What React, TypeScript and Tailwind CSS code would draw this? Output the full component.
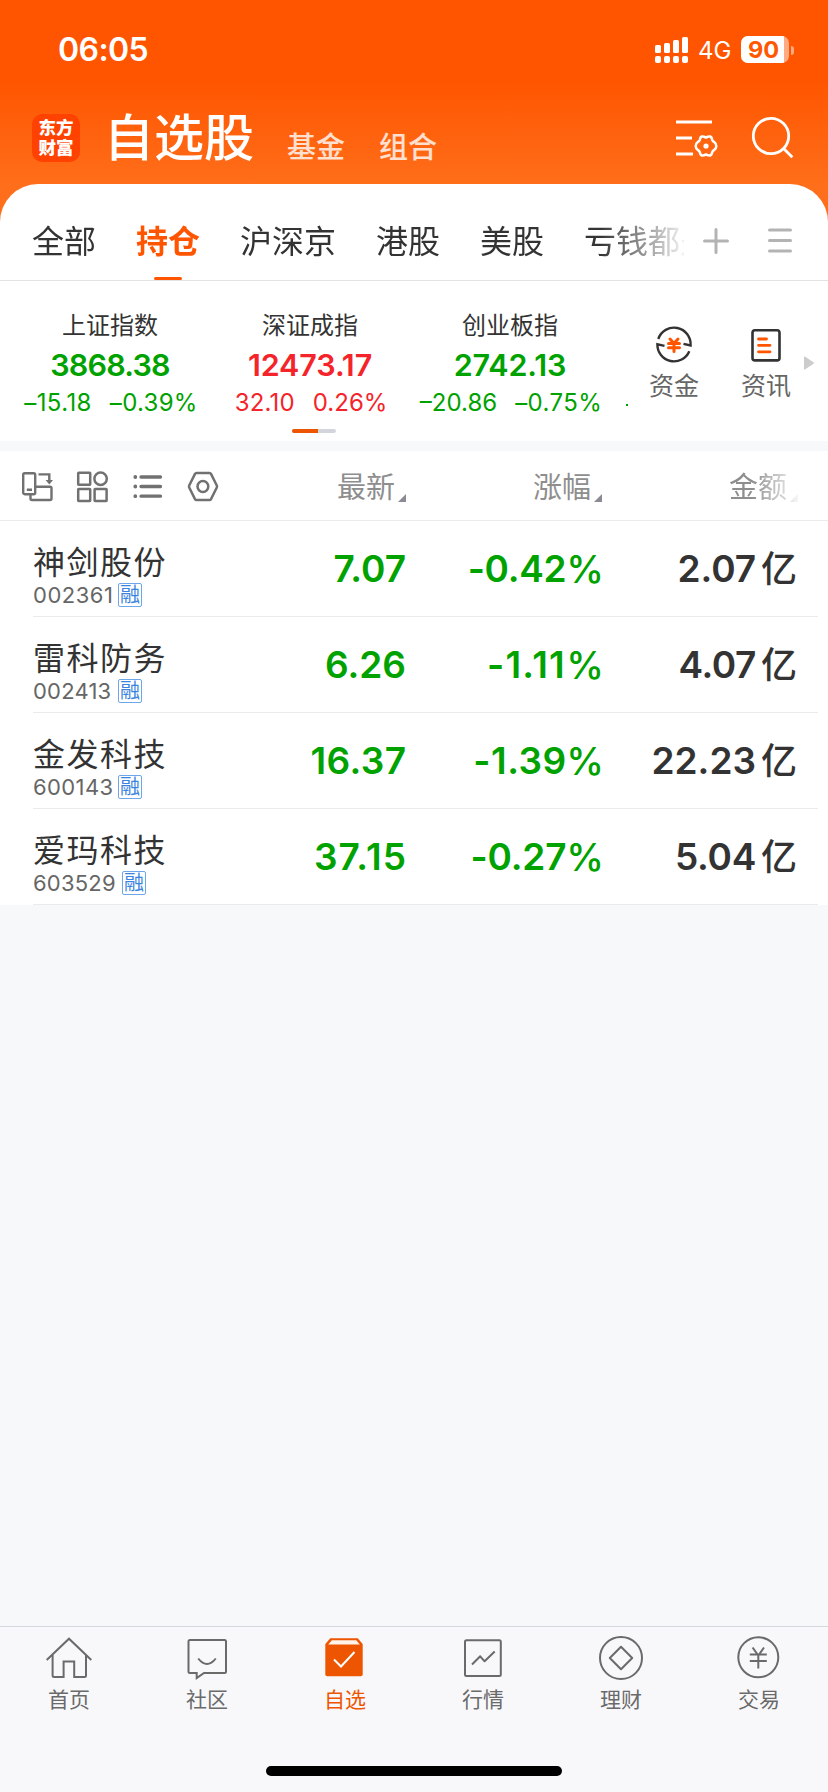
import type { ReactNode } from "react";

const GREEN = "text-[#00a200]";
const RED = "text-[#f4242a]";

const tabs = ["全部", "持仓", "沪深京", "港股", "美股", "亏钱都是"];

const indices = [
  { name: "上证指数", value: "3868.38", diff: "–15.18", pct: "–0.39%", color: GREEN, valueCls: "tracking-[-0.8px]", diffCls: "tracking-[0.4px]", pctCls: "tracking-[0.3px]" },
  { name: "深证成指", value: "12473.17", diff: "32.10", pct: "0.26%", color: RED, valueCls: "tracking-[-0.1px]", diffCls: "tracking-[0.2px]", pctCls: "" },
  { name: "创业板指", value: "2742.13", diff: "–20.86", pct: "–0.75%", color: GREEN, valueCls: "tracking-[-0.1px]", diffCls: "", pctCls: "tracking-[0.4px]" },
];

const stocks = [
  { name: "神剑股份", code: "002361", codeCls: "w-[85px] tracking-[0.5px]", price: "7.07", priceCls: "", pct: "-0.42", pctCls: "tracking-[-0.3px]", amount: "2.07", amountCls: "tracking-[-0.1px]" },
  { name: "雷科防务", code: "002413", codeCls: "w-[85px] tracking-[0.2px]", price: "6.26", priceCls: "", pct: "-1.11", pctCls: "tracking-[1.3px] mr-[0.2px]", amount: "4.07", amountCls: "tracking-[-0.4px]" },
  { name: "金发科技", code: "600143", codeCls: "w-[85px] tracking-[0.4px]", price: "16.37", priceCls: "tracking-[0.4px] mr-[-0.4px]", pct: "-1.39", pctCls: "tracking-[0.5px] mr-[-0.5px]", amount: "22.23", amountCls: "" },
  { name: "爱玛科技", code: "603529", codeCls: "w-[89px] tracking-[0.2px]", price: "37.15", priceCls: "tracking-[1.1px] mr-[-1.1px]", pct: "-0.27", pctCls: "tracking-[-0.2px]", amount: "5.04", amountCls: "tracking-[-0.3px]" },
];

function StatusBar() {
  return (
    <div className="flex h-[100px] items-center pl-[58px] pr-[34px] text-white">
      <span className="text-[32px] font-semibold leading-none tracking-[-0.6px]">06:05</span>
      <svg className="ml-auto h-[26px] w-[33px]" viewBox="0 0 33 26" fill="currentColor">
        <rect x="0" y="8" width="6" height="8" rx="1.5" />
        <rect x="9" y="6" width="6" height="10" rx="1.5" />
        <rect x="18" y="3" width="6" height="13" rx="1.5" />
        <rect x="27" y="0" width="6" height="16" rx="1.5" />
        <rect x="0" y="19" width="6" height="7" rx="2" />
        <rect x="9" y="19" width="6" height="7" rx="2" />
        <rect x="18" y="19" width="6" height="7" rx="2" />
        <rect x="27" y="19" width="6" height="7" rx="2" />
      </svg>
      <span className="ml-[10px] mt-[2px] w-[34px] text-[24px] leading-none">4G</span>
      <div className="mb-px ml-[9px] flex h-[27px] w-[48px] overflow-hidden rounded-[7px] bg-white/50">
        <span className="flex h-full w-[43px] items-center justify-center bg-white pl-[2px] text-[23.5px] font-bold leading-none text-[#ff5800]">
          90
        </span>
      </div>
      <span className="ml-[2px] h-[9px] w-[3px] rounded-r-full bg-white/50" />
    </div>
  );
}

function TitleBar() {
  return (
    <div className="flex h-[84px] pl-8 pr-[34px] text-white">
      <div className="mt-[14px] flex h-12 w-12 flex-col items-center justify-center rounded-[10px] bg-[#ff4200] text-[17.5px] font-black leading-[20px]">
        <span>东方</span>
        <span>财富</span>
      </div>
      <h1 className="ml-[24px] mt-[10px] text-[50px] font-medium leading-[56px]">自选股</h1>
      <span className="ml-[33px] mt-[28px] text-[29px] font-medium leading-[40px] text-white/80">基金</span>
      <span className="ml-[34px] mt-[28px] text-[29px] font-medium leading-[40px] text-white/80">组合</span>
      <svg className="ml-auto mt-[18px] h-[42px] w-[44px]" viewBox="0 0 44 42" fill="none" stroke="currentColor" strokeWidth="3">
        <path d="M1 4h36M1 20h16M1 36h17" />
        <path
          d="M31 19.600Q33 18.300 35.300 18.500Q36.800 19.200 37.200 21.800Q37.700 23.300 39.200 24Q41.300 25.500 41.300 28Q41.300 30.500 39.200 32Q37.700 32.700 37.200 34.200Q36.800 36.800 35.300 37.500Q33 37.700 31 36.400Q29 37.700 26.700 37.500Q25.200 36.800 24.800 34.200Q24.300 32.700 22.800 32Q20.700 30.500 20.700 28Q20.700 25.500 22.800 24Q24.300 23.300 24.800 21.800Q25.200 19.200 26.700 18.500Q29 18.300 31 19.600z"
          strokeWidth="2.5"
          strokeLinejoin="round"
        />
        <circle cx="31" cy="28" r="2.6" fill="currentColor" stroke="none" />
      </svg>
      <svg className="ml-[31px] mt-[16px] h-[44px] w-[44px]" viewBox="0 0 44 44" fill="none" stroke="currentColor" strokeWidth="2.8">
        <circle cx="21" cy="20" r="17.7" />
        <path d="M33.300 32.300l9 9" />
      </svg>
    </div>
  );
}

function GroupTabs() {
  return (
    <div className="flex h-[97px] border-b border-[#e2e2e2]">
      <div className="flex w-[684px] gap-10 overflow-hidden whitespace-nowrap pl-8 [mask-image:linear-gradient(to_right,black_600px,transparent_690px)]">
        {tabs.map((t, i) => (
          <div key={t} className="flex shrink-0 flex-col items-center">
            <span
              className={
                i === 1
                  ? "mt-[38px] text-[32px] font-bold leading-[40px] text-[#ff5500]"
                  : "mt-[38px] text-[32px] leading-[40px] text-[#333]"
              }
            >
              {t}
            </span>
            {i === 1 && <span className="mt-[15px] h-1 w-7 rounded-[2px] bg-[#ff5500]" />}
          </div>
        ))}
      </div>
      <svg className="ml-[18px] mt-[43px] h-7 w-7" viewBox="0 0 28 28" stroke="#b3b3b3" strokeWidth="3" strokeLinecap="round">
        <path d="M14 2.500v23M2.500 14h23" />
      </svg>
      <svg className="ml-[37px] mt-[43px] h-7 w-[26px]" viewBox="0 0 26 28" stroke="#b3b3b3" strokeWidth="3" strokeLinecap="round">
        <path d="M2.500 3h21M2.500 13.500h21M2.500 24h21" />
      </svg>
    </div>
  );
}

function IndexPanel() {
  return (
    <div className="flex h-[160px]">
      <div className="flex w-[628px] flex-col overflow-hidden pl-[10px]">
        <div className="flex">
          {indices.map((x) => (
            <div key={x.name} className="flex w-[200px] shrink-0 flex-col items-center whitespace-nowrap">
              <span className="mt-[29px] text-[24px] leading-[32px] text-[#333]">{x.name}</span>
              <span className={`mt-[5px] text-[30.5px] font-semibold leading-[36px] ${x.color} ${x.valueCls}`}>{x.value}</span>
              <span className={`mt-[4px] flex gap-[18px] pl-[2px] text-[24px] leading-[32px] ${x.color}`}>
                <span className={x.diffCls}>{x.diff}</span>
                <span className={x.pctCls}>{x.pct}</span>
              </span>
            </div>
          ))}
          <span className="ml-[16px] mt-[123px] h-[2px] w-2 shrink-0 bg-[#00a200]" />
        </div>
        <div className="ml-[282px] mt-[10px] flex h-1 w-[44px] shrink-0 overflow-hidden rounded-[2px] bg-[#d2d6dc]">
          <span className="w-[26px] bg-[#ec5600]" />
        </div>
      </div>
      <div className="ml-[22px] flex w-[48px] flex-col items-center">
        <svg className="mt-[44px] h-10 w-10" viewBox="0 0 40 40" fill="none" stroke="#333" strokeWidth="2.4">
          <path d="M4.300 14A16.600 16.600 0 0 1 36.600 20.500L29.500 18.800" />
          <path d="M35.300 26.200A16.600 16.600 0 0 1 3.400 19.300L10.500 20.800" />
          <g stroke="#ff5500" strokeWidth="3" strokeLinecap="round">
            <path d="M16 14l4 4.500 4-4.500M14.500 18.500h11M14.500 22.800h11M20 19v7.500" />
          </g>
        </svg>
        <span className="mt-[5px] whitespace-nowrap text-[25px] leading-[32px] text-[#666]">资金</span>
      </div>
      <div className="ml-[44px] flex w-[48px] flex-col items-center">
        <svg className="mt-[44px] h-10 w-10" viewBox="0 0 40 40" fill="none" stroke="#333" strokeWidth="2.6">
          <rect x="6.500" y="5.200" width="27" height="30.200" rx="2.500" />
          <path d="M12.500 14h8M12.500 20.300h11.500M12.500 26.800h11.500" stroke="#ff5500" strokeWidth="2.800" strokeLinecap="round" />
        </svg>
        <span className="mt-[5px] whitespace-nowrap text-[25px] leading-[32px] text-[#666]">资讯</span>
      </div>
      <svg className="ml-[14px] mt-[75px] h-[14px] w-[10px]" viewBox="0 0 10 14" fill="#ccc">
        <path d="M0 1.500Q0 0 1.300.800L9.500 6.300Q10.400 7 9.500 7.700L1.300 13.200Q0 14 0 12.500z" />
      </svg>
    </div>
  );
}

function SortLabel({ children, faded }: { children: ReactNode; faded?: boolean }) {
  return (
    <span
      className={
        faded
          ? "flex w-[196px] justify-end [mask-image:linear-gradient(to_right,black_150px,transparent_200px)]"
          : "flex w-[196px] justify-end"
      }
    >
      <span className="text-[29px] leading-[40px] text-[#8e8e8e]">{children}</span>
      <svg className="ml-[3px] mt-[26px] h-2 w-2" viewBox="0 0 8 8" fill="#8a8a94">
        <path d="M8 0v8H0z" />
      </svg>
    </span>
  );
}

function TableHeader() {
  return (
    <div className="flex h-[70px] items-center border-b border-[#ebebeb] pl-[20px]">
      <div className="flex w-[210px] text-[#717171]">
        <svg className="h-[34px] w-[34px]" viewBox="0 0 34 34" fill="none" stroke="currentColor" strokeWidth="2.400">
          <rect x="3.200" y="4.200" width="12" height="21" rx="1.500" />
          <path d="M6.800 20.800h5.200M10.500 26v3.500q0 1.500 1.500 1.500h18q1.500 0 1.500-1.500V19.300q0-1.500-1.500-1.500H16M18.500 5.400h10.800v7" />
          <path d="M25.600 11h7.400L29.300 15.500z" fill="currentColor" stroke="none" />
        </svg>
        <svg className="ml-[21px] h-[34px] w-[34px]" viewBox="0 0 34 34" fill="none" stroke="currentColor" strokeWidth="2.500">
          <rect x="3.200" y="3.700" width="12" height="12" rx=".5" />
          <circle cx="25.600" cy="9.700" r="6.200" />
          <rect x="3.200" y="20" width="12" height="12" rx=".5" />
          <rect x="19.600" y="20" width="12" height="12" rx=".5" />
        </svg>
        <svg className="ml-[21px] h-[34px] w-[34px]" viewBox="0 0 34 34" fill="none" stroke="currentColor" strokeWidth="3.300" strokeLinecap="round">
          <path d="M11 8h19.500M11 17.500h19.500M11 27.200h19.500" />
          <path d="M5.300 8h.01M5.300 17.500h.01M5.300 27.200h.01" strokeWidth="3.800" />
        </svg>
        <svg className="ml-[21px] h-[34px] w-[34px]" viewBox="0 0 34 34" fill="none" stroke="currentColor" strokeWidth="2.500" strokeLinejoin="round">
          <path d="M11.500 4h13q1 0 1.500.9L31.800 16.500q.5 1 0 2L26 30.100q-.5.900-1.500.900h-13q-1 0-1.500-.9L4.200 18.500q-.5-1 0-2L10 4.900q.5-.9 1.500-.9z" />
          <circle cx="17.900" cy="17.500" r="5.400" />
        </svg>
      </div>
      <div className="ml-[-20px] mt-[4px] flex">
        <SortLabel>最新</SortLabel>
        <SortLabel>涨幅</SortLabel>
        <SortLabel faded>金额</SortLabel>
      </div>
    </div>
  );
}

function StockRow({ s }: { s: (typeof stocks)[number] }) {
  return (
    <div className="ml-[33px] mr-[10px] flex h-24 border-b border-[#ebebeb] text-[37px] font-semibold leading-[96px]">
      <div className="flex w-[177px] flex-col font-normal">
        <span className="mt-[22px] whitespace-nowrap text-[32px] leading-[40px] tracking-[1.500px] text-[#333]">{s.name}</span>
        <div className="flex">
          <span className={`shrink-0 text-[22px] leading-[24px] text-[#666] ${s.codeCls}`}>{s.code}</span>
          <span className="flex h-6 w-6 items-center justify-center rounded-[2px] border border-[#6ea6ec] text-[20px] leading-none text-[#3a84e0]">
            融
          </span>
        </div>
      </div>
      <span className={`flex w-[196px] justify-end ${GREEN}`}>
        <span className={s.priceCls}>{s.price}</span>
      </span>
      <span className={`flex w-[196px] justify-end ${GREEN}`}>
        <span className={s.pctCls}>{s.pct}</span>
        <span className="mr-[-2px] text-[38px] font-medium">%</span>
      </span>
      <span className="flex w-[195px] justify-end text-[#333]">
        <span className={s.amountCls}>{s.amount}</span>
        <span className="ml-[5px] text-[36px] font-medium">亿</span>
      </span>
    </div>
  );
}

const navItems: { label: string; active?: boolean; icon: ReactNode }[] = [
  {
    label: "首页",
    icon: (
      <>
        <path d="M1.700 24L24 2.700 46.300 24" />
        <path d="M7.600 19v20.500q0 1.500 1.500 1.500h9.500V25.400h10.600V41h10.300q1.500 0 1.500-1.500V19" />
      </>
    ),
  },
  {
    label: "社区",
    icon: (
      <>
        <path d="M7 4h34.500q1.500 0 1.500 1.500v30q0 1.500-1.500 1.500H21l-7.300 5V37H7q-1.500 0-1.500-1.500v-30Q5.500 4 7 4z" />
        <path d="M15.200 22.500q8.800 11 17.600 0" />
      </>
    ),
  },
  {
    label: "自选",
    active: true,
    icon: (
      <>
        <path d="M9.300 2.300h27.400l5 5.700v30.200q0 2-2 2H6.300q-2 0-2-2V8z" fill="currentColor" stroke="none" />
        <path d="M10.900 4.300h24.400l3.600 4.200H7.200z" fill="#fff3ea" stroke="none" />
        <path d="M13 23.500l7 7L33.500 16" stroke="#fff" />
      </>
    ),
  },
  {
    label: "行情",
    icon: (
      <>
        <rect x="6" y="4.200" width="35.800" height="35.800" rx="1.500" />
        <path d="M13 28.500l8.200-8.200 4.400 5L35.700 15.500" strokeLinejoin="round" />
      </>
    ),
  },
  {
    label: "理财",
    icon: (
      <>
        <circle cx="24" cy="22" r="21" />
        <path d="M24 10.800L35.200 22 24 33.200 12.800 22z" strokeLinejoin="round" />
      </>
    ),
  },
  {
    label: "交易",
    icon: (
      <>
        <circle cx="23.300" cy="21.300" r="20" />
        <path d="M17.600 11.500l5.700 8 5.700-8M14.800 18.500h17M14.800 25h17M23.300 19v13.500" />
      </>
    ),
  },
];

function BottomNav() {
  return (
    <div className="flex h-[166px] flex-col items-center border-t border-[#d3d7de] bg-[#f8f8fb]">
      <div className="flex w-full">
        {navItems.map((n) => (
          <div
            key={n.label}
            className={n.active ? "flex w-[138px] flex-col items-center text-[#ee5500]" : "flex w-[138px] flex-col items-center text-[#6a6a6a]"}
          >
            <svg className="mt-[9px] h-[46px] w-12" viewBox="0 0 48 46" fill="none" stroke="currentColor" strokeWidth="2">
              {n.icon}
            </svg>
            <span className="mt-[3px] text-[21px] leading-[30px]">{n.label}</span>
          </div>
        ))}
      </div>
      <div className="mt-[51px] h-[10px] w-[296px] rounded-full bg-black" />
    </div>
  );
}

export default function App() {
  return (
    <div className="flex h-[1792px] w-[828px] flex-col overflow-hidden bg-[#f7f8fa] font-['Inter','Noto_Sans_CJK_SC',sans-serif]">
      <div className="bg-[linear-gradient(to_bottom,#ff5500_0px,#ff5500_80px,#ff6e1a_184px,#ff6e1a_240px)]">
        <StatusBar />
        <TitleBar />
        <div className="rounded-t-[38px] bg-white">
          <GroupTabs />
          <IndexPanel />
        </div>
      </div>
      <div className="mt-[10px] bg-white">
        <TableHeader />
        {stocks.map((s) => (
          <StockRow key={s.code} s={s} />
        ))}
      </div>
      <div className="flex-1" />
      <BottomNav />
    </div>
  );
}
